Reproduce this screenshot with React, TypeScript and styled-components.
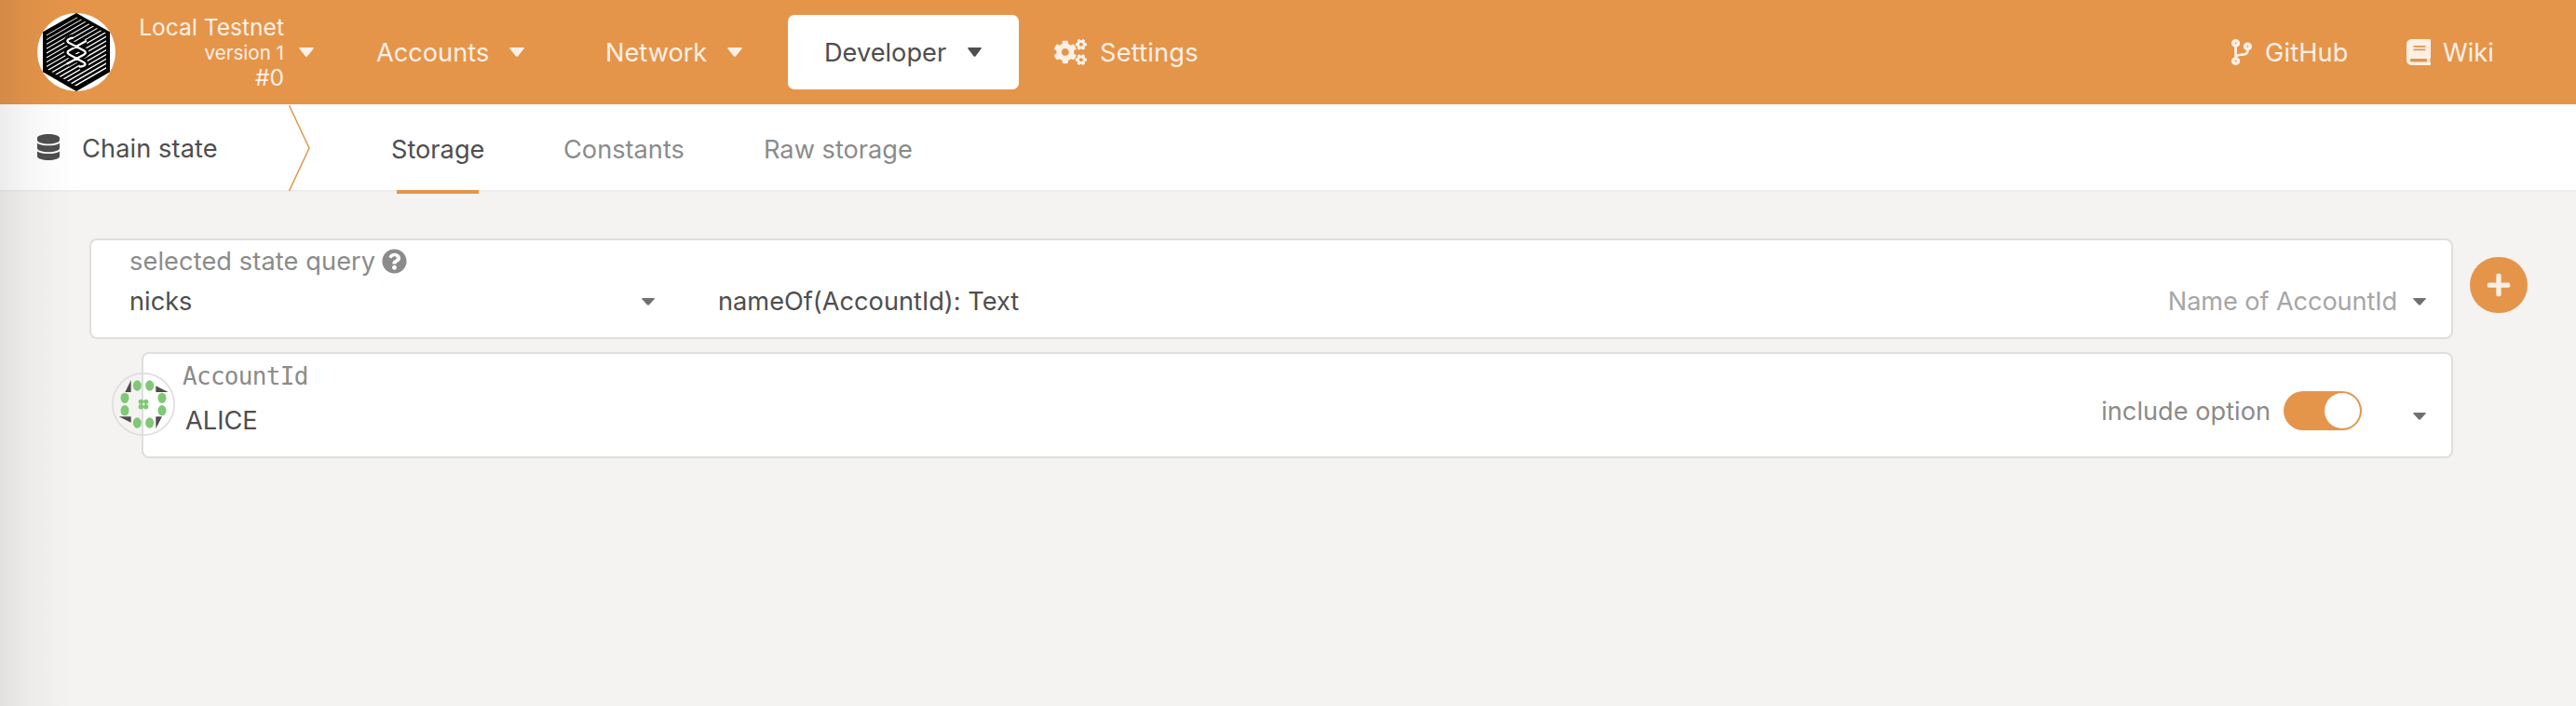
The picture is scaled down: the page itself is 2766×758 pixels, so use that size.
import React from 'react';
import styled, { createGlobalStyle } from 'styled-components';
import { FaDatabase, FaCogs, FaCodeBranch, FaBook, FaQuestionCircle, FaPlus } from 'react-icons/fa';

const accent = '#e5954a';
const ink = '#4e4e4e';

const GlobalStyle = createGlobalStyle`
  * { box-sizing: border-box; }
  body {
    margin: 0;
    background: #f4f3f1;
    color: ${ink};
    font: 400 27.2px/36px Inter, "Liberation Sans", sans-serif;
    white-space: nowrap;
  }
`;

const Page = styled.div`
  position: relative;
  height: 758px;
  overflow: hidden;
`;

const EdgeShade = styled.div`
  position: absolute;
  inset: 0 auto 0 0;
  width: 90px;
  background: linear-gradient(to right, rgba(0, 0, 0, 0.075), rgba(0, 0, 0, 0.036) 33%, rgba(0, 0, 0, 0.012) 66%, transparent);
  pointer-events: none;
`;

const Label = styled.span<{ $track?: number }>`
  letter-spacing: ${(p) => p.$track ?? 0}px;
`;

const TopBar = styled.header`
  display: flex;
  align-items: center;
  height: 112px;
  padding: 0 88px 0 40px;
  background: ${accent};
  color: #fcf0e6;
`;

const Logo = styled.svg`
  width: 84px;
  height: 84px;
  flex: none;
`;

const ChainInfo = styled.div`
  width: 181px;
  display: flex;
  flex-direction: column;
  align-items: flex-end;
  font-size: 24.6px;
  line-height: 27px;
`;

const Version = styled.div`
  font-size: 20.6px;
`;

const Triangle = styled.svg<{ $w: number; $gap: number }>`
  width: ${(p) => p.$w}px;
  height: ${(p) => (p.$w > 14 ? 10 : 8)}px;
  margin-left: ${(p) => p.$gap}px;
  flex: none;
`;

const MenuItem = styled.div<{ $width: number; $pad: number; $active?: boolean }>`
  display: flex;
  align-items: center;
  width: ${(p) => p.$width}px;
  height: 80px;
  padding-left: ${(p) => p.$pad}px;
  border-radius: 7px;
  background: ${(p) => (p.$active ? '#fff' : 'transparent')};
  color: ${(p) => (p.$active ? ink : 'inherit')};
`;

const MenuText = styled.span<{ $width: number; $track?: number }>`
  width: ${(p) => p.$width}px;
  padding-top: 1px;
  letter-spacing: ${(p) => p.$track ?? 0}px;
`;

const IconBox = styled.span<{ $width: number; $icon: number }>`
  display: flex;
  width: ${(p) => p.$width}px;

  svg {
    width: ${(p) => p.$icon}px;
    height: 28px;
  }
`;

const Links = styled.nav`
  display: flex;
  align-items: center;
  margin-left: auto;
`;

const TabBar = styled.nav`
  display: flex;
  height: 94px;
  padding-left: 40px;
  background: #fff;
  border-bottom: 2px solid #eeedeb;
`;

const TabTitle = styled.div`
  display: flex;
  align-items: center;
  width: 270px;
  height: 92px;
`;

const TitleText = styled.span`
  padding-top: 4px;
  letter-spacing: 0.1px;
`;

const Chevron = styled.svg`
  width: 24px;
  height: 94px;
  flex: none;
`;

const Tab = styled.div<{ $left: number; $width: number; $active?: boolean }>`
  position: relative;
  width: ${(p) => p.$width}px;
  margin-left: ${(p) => p.$left}px;
  line-height: 97px;
  color: ${(p) => (p.$active ? ink : '#8b8b8b')};

  &::after {
    content: '';
    display: ${(p) => (p.$active ? 'block' : 'none')};
    position: absolute;
    left: 6px;
    bottom: -4px;
    width: 88px;
    height: 4px;
    background: ${accent};
  }
`;

const Main = styled.main`
  display: flex;
  align-items: flex-start;
  gap: 18px;
  padding: 50px 0 0 96px;
`;

const Fields = styled.div`
  display: flex;
  flex-direction: column;
  flex: none;
  gap: 14px;
  width: 2538px;
`;

const Panel = styled.section`
  background: #fff;
  border: 2px solid #dededd;
  border-radius: 8px;
`;

const QueryPanel = styled(Panel)`
  height: 108px;
  padding: 6px 27px 0 41px;
`;

const ParamPanel = styled(Panel)`
  position: relative;
  display: flex;
  align-items: flex-start;
  height: 114px;
  margin-left: 56px;
  padding: 7px 27px 0 42px;
`;

const Hint = styled.div`
  display: flex;
  align-items: center;
  height: 34px;
  color: #8b8b8b;
`;

const HelpIcon = styled(FaQuestionCircle)`
  width: 27px;
  height: 27px;
  margin: -2px 0 0 7px;
`;

const Row = styled.div`
  display: flex;
  align-items: center;
  height: 52px;
`;

const Module = styled.div`
  display: flex;
  align-items: center;
  justify-content: space-between;
  width: 564px;
`;

const Method = styled.div`
  display: flex;
  align-items: center;
  flex: 1;
  margin-left: 68px;
`;

const Doc = styled.span`
  margin-left: auto;
  color: #a6a6a6;
  letter-spacing: -0.12px;
`;

const Param = styled.div`
  display: flex;
  flex-direction: column;
`;

const TypeName = styled.div`
  font: 400 26px/34px "DejaVu Sans Mono", monospace;
  letter-spacing: -0.7px;
  color: #8b8b8b;
`;

const Account = styled.div`
  padding: 13px 0 0 3px;
`;

const Option = styled.div`
  display: flex;
  align-items: center;
  gap: 14px;
  margin-left: auto;
  height: 108px;
  color: #8b8b8b;
`;

const OptionText = styled.span`
  padding-top: 2px;
`;

const Switch = styled.div`
  display: flex;
  justify-content: flex-end;
  width: 84px;
  height: 42px;
  padding: 2px;
  border-radius: 21px;
  background: ${accent};
`;

const Knob = styled.div`
  width: 38px;
  height: 38px;
  border-radius: 50%;
  background: #fff;
`;

const ParamCaret = styled.div`
  padding-top: 55px;
  line-height: 0;
`;

const Identicon = styled.svg`
  position: absolute;
  left: -34px;
  top: 20px;
  width: 68px;
  height: 68px;
`;

const AddButton = styled.button`
  display: flex;
  align-items: center;
  justify-content: center;
  width: 62px;
  height: 60px;
  margin-top: 20px;
  padding: 0;
  border: 0;
  border-radius: 30px;
  background: ${accent};
  color: #fcf0e6;
  font-size: 28px;
`;

const Caret = ({ w, gap, color = 'currentColor' }: { w: number; gap: number; color?: string }) => (
  <Triangle $w={w} $gap={gap} viewBox="0 0 16 10" preserveAspectRatio="none" fill={color}>
    <path d="M1 0H15Q16.4 0.3 15.4 1.6L9.2 9.2Q8 10.4 6.8 9.2L0.6 1.6Q-0.4 0.3 1 0Z" />
  </Triangle>
);

const hatches = Array.from({ length: 16 }, (_, i) => 58 + i * 14.4);
const helix =
  'M233 122C222 124 211 131 221 137L270 163Q281 170 270 176L217 205M276 133L224 162Q211 169 224 176L270 201C281 208 270 214 257 215';

const ellipses = [
  [112, 72], [152, 72], [192, 112], [192, 152],
  [152, 192], [112, 192], [72, 152], [72, 112],
];

export default function App() {
  return (
    <Page>
      <GlobalStyle />
      <TopBar>
        <Logo viewBox="120 42 252 252">
          <clipPath id="inner"><path d="M246 54L342 107V222L246 278L150 222V107Z" /></clipPath>
          <circle cx="246" cy="168" r="126" fill="#fff" />
          <path d="M246 42L354 103V232L246 294L138 232V103Z" fill="#000" />
          <g clipPath="url(#inner)" stroke="#fff">
            {hatches.map((y, i) => <path key={y} d={`M146 ${y + 57.7}L346 ${y - 57.7}`} strokeWidth={2.8 + i * 0.12} />)}
          </g>
          <path d={helix} fill="none" stroke="#000" strokeWidth="22" />
          <path d={helix} fill="none" stroke="#fff" strokeWidth="7" strokeLinecap="round" />
        </Logo>
        <ChainInfo>
          <Label>Local Testnet</Label>
          <Version>version 1</Version>
          <Label>#0</Label>
        </ChainInfo>
        <Caret w={16} gap={16} />
        <MenuItem $width={247} $pad={67}><MenuText $width={143}>Accounts</MenuText><Caret w={16} gap={0} /></MenuItem>
        <MenuItem $width={262} $pad={66}><MenuText $width={131}>Network</MenuText><Caret w={16} gap={0} /></MenuItem>
        <MenuItem $width={248} $pad={39} $active><MenuText $width={154}>Developer</MenuText><Caret w={15} gap={0} /></MenuItem>
        <MenuItem $width={230} $pad={38}><IconBox $width={49} $icon={35}><FaCogs /></IconBox><MenuText $width={110} $track={0.2}>Settings</MenuText></MenuItem>
        <Links>
          <IconBox $width={36} $icon={22}><FaCodeBranch preserveAspectRatio="none" /></IconBox><MenuText $width={152} $track={0.15}>GitHub</MenuText>
          <IconBox $width={39} $icon={26}><FaBook preserveAspectRatio="none" /></IconBox><MenuText $width={55}>Wiki</MenuText>
        </Links>
      </TopBar>
      <TabBar>
        <TabTitle><IconBox $width={48} $icon={24}><FaDatabase preserveAspectRatio="none" /></IconBox><TitleText>Chain state</TitleText></TabTitle>
        <Chevron viewBox="0 0 24 94" fill="none" stroke={accent} strokeWidth="1.5"><path d="M0.5 1L22 47L0.5 93" /></Chevron>
        <Tab $left={86} $width={100} $active>Storage</Tab>
        <Tab $left={85} $width={132}>Constants</Tab>
        <Tab $left={83} $width={160}>Raw storage</Tab>
      </TabBar>
      <Main>
        <Fields>
          <QueryPanel>
            <Hint><Label $track={0.1}>selected state query</Label><HelpIcon /></Hint>
            <Row>
              <Module><Label>nicks</Label><Caret w={14} gap={0} color="#707070" /></Module>
              <Method><Label>nameOf(AccountId): Text</Label><Doc>Name of AccountId</Doc><Caret w={14} gap={17} color="#707070" /></Method>
            </Row>
          </QueryPanel>
          <ParamPanel>
            <Identicon viewBox="30 30 204 204">
              <circle cx="132" cy="132" r="99.5" fill="none" stroke="#dededd" strokeWidth="5" />
              <path d="M92 54V93H73ZM172 73L212 93H172ZM172 172H192L172 211ZM53 172H92V191Z" fill={ink} />
              <g fill="#7fc875">
                {ellipses.map(([x, y]) => <ellipse key={`${x}-${y}`} cx={x} cy={y} rx="13.5" ry="17" />)}
                {[[124, 124], [140, 124], [124, 140], [140, 140]].map(([x, y]) => <circle key={`${x}-${y}`} cx={x} cy={y} r="8" />)}
              </g>
            </Identicon>
            <Param><TypeName>AccountId</TypeName><Account>ALICE</Account></Param>
            <Option><OptionText>include option</OptionText><Switch><Knob /></Switch></Option>
            <ParamCaret><Caret w={14} gap={55} color="#707070" /></ParamCaret>
          </ParamPanel>
        </Fields>
        <AddButton><FaPlus /></AddButton>
      </Main>
      <EdgeShade />
    </Page>
  );
}
